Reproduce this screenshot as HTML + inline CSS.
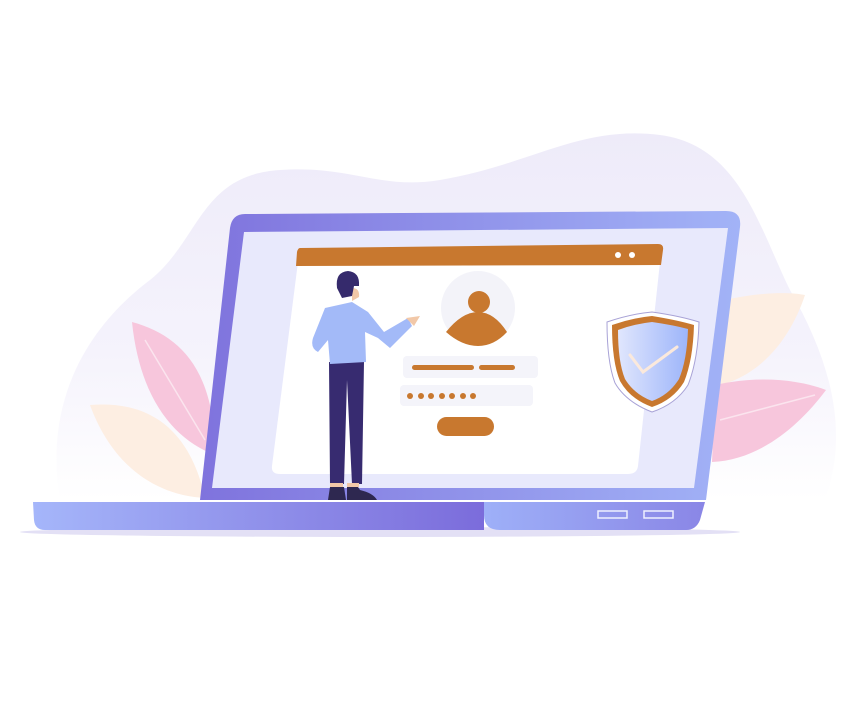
<!DOCTYPE html>
<html><head><meta charset="utf-8"><style>html,body{margin:0;padding:0;background:#fff;width:853px;height:718px;overflow:hidden}</style></head>
<body>
<svg width="853" height="718" viewBox="0 0 853 718" xmlns="http://www.w3.org/2000/svg">
<defs>
<linearGradient id="blob" x1="0" y1="0" x2="0" y2="1"><stop offset="0" stop-color="#eeebf9"/><stop offset="0.6" stop-color="#f5f3fc"/><stop offset="1" stop-color="#ffffff"/></linearGradient>
<linearGradient id="scr" x1="0" y1="0" x2="1" y2="0"><stop offset="0" stop-color="#7f73dd"/><stop offset="1" stop-color="#a2b3f7"/></linearGradient>
<linearGradient id="base" x1="0" y1="0" x2="1" y2="0"><stop offset="0" stop-color="#a5b6fa"/><stop offset="1" stop-color="#7b6cdb"/></linearGradient>
<linearGradient id="tab" x1="0" y1="0" x2="1" y2="0"><stop offset="0" stop-color="#9eb0f8"/><stop offset="1" stop-color="#8a86e6"/></linearGradient>
<linearGradient id="sh" x1="0" y1="0" x2="1" y2="0"><stop offset="0" stop-color="#e0e6fd"/><stop offset="1" stop-color="#9db5fa"/></linearGradient>
</defs>
<path d="M60 500 C40 380 110 310 150 280 C200 240 200 175 280 170 C350 165 380 190 440 180 C530 165 580 125 660 135 C740 145 760 230 790 290 C830 360 850 430 825 500 Z" fill="url(#blob)"/>
<!-- leaves -->
<path d="M132 322 C180 335 215 370 215 455 C175 440 140 400 132 322 Z" fill="#f7c6dc"/>
<path d="M145 340 L205 440" stroke="#fbe4ee" stroke-width="1.5"/>
<path d="M90 405 C150 400 190 430 205 498 C150 495 110 460 90 405 Z" fill="#fdeee2"/>
<path d="M725 300 C760 292 790 292 805 295 C790 340 760 375 720 385 Z" fill="#fdeee2"/>
<path d="M715 385 C760 375 800 380 826 390 C800 425 760 460 712 462 Z" fill="#f7c6dc"/>
<path d="M720 420 L815 395" stroke="#fbe4ee" stroke-width="1.5"/>
<!-- shadow -->
<ellipse cx="380" cy="532" rx="360" ry="5" fill="#e3e0f5"/>
<!-- screen -->
<path d="M245 214 L726 211 Q742 211 740 227 L706 500 L200 500 L230 228 Q232 214 245 214 Z" fill="url(#scr)"/>
<path d="M244 232 L728 228 L694 488 L212 488 Z" fill="#e8e9fc"/>
<path d="M298 262 L660 262 L638 466 Q637 474 628 474 L280 474 Q271 474 272 466 Z" fill="#fff"/>
<path d="M300 248 L658 244 Q664 244 663 250 L661 265 L296 266 L297 252 Q298 248 300 248 Z" fill="#c8782f"/>
<circle cx="618" cy="255" r="3" fill="#fff"/><circle cx="632" cy="255" r="3" fill="#fff"/>
<!-- avatar -->
<circle cx="478" cy="308" r="37" fill="#f3f3f9"/>
<circle cx="479" cy="302" r="11" fill="#c8782f"/>
<path d="M446 332 Q462 312 478 312 Q494 312 507 332 Q494 346 478 346 Q462 346 446 332 Z" fill="#c8782f"/>
<rect x="403" y="356" width="135" height="22" rx="4" fill="#f4f4fa"/>
<rect x="412" y="365" width="62" height="5" rx="2.5" fill="#c8782f"/>
<rect x="479" y="365" width="36" height="5" rx="2.5" fill="#c8782f"/>
<rect x="400" y="385" width="133" height="21" rx="4" fill="#f4f4fa"/>
<g fill="#c8782f"><circle cx="410" cy="396" r="3"/><circle cx="421" cy="396" r="3"/><circle cx="431" cy="396" r="3"/><circle cx="442" cy="396" r="3"/><circle cx="452" cy="396" r="3"/><circle cx="463" cy="396" r="3"/><circle cx="473" cy="396" r="3"/></g>
<rect x="437" y="417" width="57" height="19" rx="9.5" fill="#c8782f"/>
<!-- shield -->
<path d="M652 312 Q680 316 699 322 Q698 360 688 385 Q676 404 652 412 Q626 402 615 383 Q607 362 607 322 Q630 314 652 312 Z" fill="#fff" stroke="#a8a2d6" stroke-width="1"/>
<path d="M652 316 Q677 320 694 325 Q693 360 684 382 Q673 400 652 407 Q630 399 620 381 Q612 362 612 325 Q632 318 652 316 Z" fill="#c8782f"/>
<path d="M652 322 Q673 325 688 329 Q687 360 679 379 Q669 395 652 401 Q634 394 625 379 Q618 362 618 330 Q634 324 652 322 Z" fill="url(#sh)"/>
<path d="M630 355 L643 372 L677 347" fill="none" stroke="#fbe9dc" stroke-width="3" stroke-linecap="round"/>
<!-- base -->
<path d="M33 502 L484 502 L484 530 L45 530 Q35 530 34 520 Z" fill="url(#base)"/>
<path d="M484 502 L705 502 L700 520 Q696 530 686 530 L500 530 Q484 530 484 515 Z" fill="url(#tab)"/>
<rect x="598" y="511" width="29" height="7" fill="none" stroke="#eef0ff" stroke-width="1.5"/>
<rect x="644" y="511" width="29" height="7" fill="none" stroke="#eef0ff" stroke-width="1.5"/>
<!-- man -->
<path d="M329 362 L364 362 L362 484 L352 484 L347 380 L344 484 L330 484 Z" fill="#372b70"/>
<path d="M330 487 L328 500 L346 500 L344 487 Z M347 487 L347 500 L377 500 Q373 493 360 490 L358 487 Z" fill="#2e2850"/>
<path d="M330 483 h13 v4 h-13z M347 483 h12 v4 h-12z" fill="#f2c8a8"/>
<path d="M325 308 L352 302 L368 312 L384 332 L408 318 L412 326 L390 348 L378 338 L365 332 L366 362 L330 364 L328 340 L318 352 Q310 348 313 338 Z" fill="#a3baf8"/>
<path d="M406 318 L420 316 L414 326 Z" fill="#f2c8a8"/>
<path d="M352 288 Q360 288 359 297 L352 301 Z" fill="#f2c8a8"/>
<path d="M337 288 Q335 272 348 271 Q360 272 359 286 L354 286 L352 296 L342 298 Z" fill="#352a6c"/>
</svg>
</body></html>
